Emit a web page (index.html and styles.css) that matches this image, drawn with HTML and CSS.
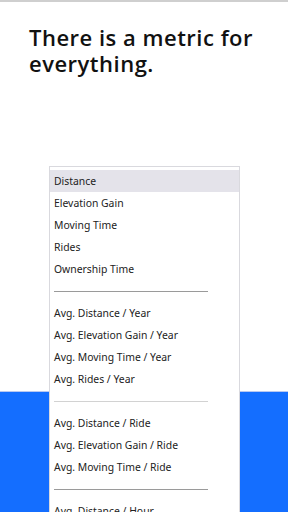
FILE: index.html
```html
<!doctype html>
<html lang="en">
<head>
  <meta charset="utf-8">
  <title>Metrics</title>
  <link rel="stylesheet" href="styles.css">
</head>
<body class="app">
  <div class="topline"></div>
  <h1 class="headline">There is a metric for everything.</h1>

  <div class="stage">
    <ul class="metric-list">
      <li class="metric selected">Distance</li>
      <li class="metric">Elevation Gain</li>
      <li class="metric">Moving Time</li>
      <li class="metric">Rides</li>
      <li class="metric">Ownership Time</li>
      <li class="divider dark"></li>
      <li class="metric">Avg. Distance / Year</li>
      <li class="metric">Avg. Elevation Gain / Year</li>
      <li class="metric">Avg. Moving Time / Year</li>
      <li class="metric">Avg. Rides / Year</li>
      <li class="divider light"></li>
      <li class="metric">Avg. Distance / Ride</li>
      <li class="metric">Avg. Elevation Gain / Ride</li>
      <li class="metric">Avg. Moving Time / Ride</li>
      <li class="divider dark"></li>
      <li class="metric">Avg. Distance / Hour</li>
    </ul>
  </div>
</body>
</html>
```

FILE: styles.css
```css
.app {
  margin: 0;
  padding: 0;
  width: 288px;
  height: 512px;
  overflow: hidden;
  background: #ffffff;
}

.topline {
  height: 2px;
  background: #cfcfcf;
}

.headline {
  margin: 0;
  padding: 22px 20px 0 29px;
  height: 164px;
  box-sizing: border-box;

  font-family: 'Open Sans', sans-serif;
  font-weight: 600;
  font-size: 22px;
  line-height: 26px;
  letter-spacing: 0.5px;
  color: #111111;
}

.stage {
  height: 346px;
  overflow: hidden;
  padding-left: 49px;
  background: linear-gradient(to bottom, #ffffff 0, #ffffff 225px, #b9c8f0 225px, #b9c8f0 226px, #146eff 226px);
}

.metric-list {
  width: 189px;
  height: 400px;
  margin: 0;
  padding: 3px 0 0 0;
  list-style: none;

  background: #ffffff;
  border: 1px solid #d9d9de;

  font-family: 'Noto Sans', sans-serif;
  font-size: 10.4px;
  color: #222222;
}

.metric {
  height: 22px;
  line-height: 22px;
  padding-left: 4px;
  white-space: nowrap;
}

.selected {
  background: #e4e3ea;
}

.divider {
  height: 22px;
  margin: 0 31px 0 4px;
  display: flex;
  align-items: center;
}

.divider::after {
  content: '';
  flex: 1 1 auto;
  height: 1px;
}

.divider.dark::after {
  background: #9a9a9a;
}

.divider.light::after {
  background: #d2d2d2;
}
```
